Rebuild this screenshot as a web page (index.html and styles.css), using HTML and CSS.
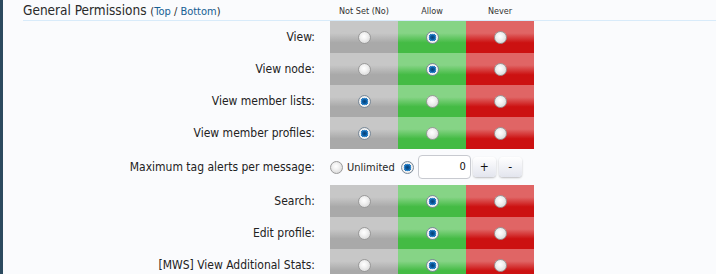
FILE: index.html
```html
<!DOCTYPE html>
<html>
<head>
<meta charset="utf-8">
<link rel="stylesheet" href="styles.css">
</head>
<body>
<div class="page">
  <div class="sidebar"></div>
  <div class="main">
    <div class="row head">
      <h3 class="title">General Permissions <span class="nav">(<a href="#">Top</a> / <a href="#">Bottom</a>)</span></h3>
      <div class="colhead">Not Set (No)</div>
      <div class="colhead">Allow</div>
      <div class="colhead">Never</div>
    </div>

    <div class="row">
      <div class="label">View:</div>
      <div class="cell unset"><span class="radio"></span></div>
      <div class="cell allow"><span class="radio on"></span></div>
      <div class="cell never"><span class="radio"></span></div>
    </div>
    <div class="row">
      <div class="label">View node:</div>
      <div class="cell unset"><span class="radio"></span></div>
      <div class="cell allow"><span class="radio on"></span></div>
      <div class="cell never"><span class="radio"></span></div>
    </div>
    <div class="row">
      <div class="label">View member lists:</div>
      <div class="cell unset"><span class="radio on"></span></div>
      <div class="cell allow"><span class="radio"></span></div>
      <div class="cell never"><span class="radio"></span></div>
    </div>
    <div class="row">
      <div class="label">View member profiles:</div>
      <div class="cell unset"><span class="radio on"></span></div>
      <div class="cell allow"><span class="radio"></span></div>
      <div class="cell never"><span class="radio"></span></div>
    </div>

    <div class="row tall">
      <div class="label">Maximum tag alerts per message:</div>
      <div class="options">
        <span class="radio small"></span>
        <span class="opt-text">Unlimited</span>
        <span class="radio small on"></span>
        <span class="numbox">0</span>
        <span class="btn">+</span>
        <span class="btn">-</span>
      </div>
    </div>

    <div class="row">
      <div class="label">Search:</div>
      <div class="cell unset"><span class="radio"></span></div>
      <div class="cell allow"><span class="radio on"></span></div>
      <div class="cell never"><span class="radio"></span></div>
    </div>
    <div class="row">
      <div class="label">Edit profile:</div>
      <div class="cell unset"><span class="radio"></span></div>
      <div class="cell allow"><span class="radio on"></span></div>
      <div class="cell never"><span class="radio"></span></div>
    </div>
    <div class="row">
      <div class="label">[MWS] View Additional Stats:</div>
      <div class="cell unset"><span class="radio"></span></div>
      <div class="cell allow"><span class="radio on"></span></div>
      <div class="cell never"><span class="radio"></span></div>
    </div>
  </div>
</div>
</body>
</html>
```

FILE: styles.css
```css
html, body {
  margin: 0;
  padding: 0;
  background: #fafbfd;
}
body {
  font-family: "DejaVu Sans Condensed", "DejaVu Sans", sans-serif;
  color: #252525;
  height: 274px;
  overflow: hidden;
}
.page {
  display: flex;
  height: 274px;
}
.sidebar {
  width: 3px;
  background: #2c4a5f;
  flex: none;
}
.main {
  flex: 1;
  padding-left: 20px;
}
.row {
  display: grid;
  grid-template-columns: 307px 68px 68px 68px;
  height: 32px;
}
.row.head {
  height: 20px;
  border-bottom: 1px solid #d8ebfa;
  align-items: center;
}
.title {
  margin: 0;
  font-size: 13.5px;
  font-weight: normal;
  line-height: 20px;
  color: #2a2a2a;
  white-space: nowrap;
}
.nav {
  font-size: 11px;
  color: #2a2a2a;
}
.nav a {
  color: #176093;
  text-decoration: none;
}
.colhead {
  font-size: 9px;
  text-align: center;
  color: #333;
}
.label {
  font-size: 12px;
  text-align: right;
  padding-right: 15px;
  display: flex;
  align-items: center;
  justify-content: flex-end;
  color: #222;
}
.cell {
  display: flex;
  align-items: center;
  justify-content: center;
}
.unset {
  background: linear-gradient(to bottom, #c7c7c7 0%, #c7c7c7 38%, #a9a9a9 68%, #a9a9a9 100%);
}
.allow {
  background: linear-gradient(to bottom, #86d486 0%, #86d486 38%, #44bb44 68%, #44bb44 100%);
}
.never {
  background: linear-gradient(to bottom, #e06565 0%, #e06565 38%, #cc1111 68%, #cc1111 100%);
}
.radio {
  width: 11px;
  height: 11px;
  border-radius: 50%;
  border: 1px solid #9a9a9a;
  background: radial-gradient(circle at 45% 40%, #ffffff 0%, #f2f2f2 35%, #cfcfcf 100%);
  box-sizing: content-box;
  flex: none;
}
.radio.on {
  border-color: #7a8a99;
  background: radial-gradient(circle at 50% 50%, #0a3f6e 0%, #0a5ea8 30%, #3b8fd0 42%, #1a70b8 48%, #f4f4f4 52%, #d8d8d8 100%);
}
.row.tall {
  height: 36px;
}
.options {
  grid-column: 2 / -1;
  display: flex;
  align-items: center;
  font-size: 11px;
}
.opt-text {
  margin-left: 4px;
  margin-right: 6px;
}
.numbox {
  margin-left: 4px;
  width: 53px;
  height: 24px;
  box-sizing: border-box;
  border: 1px solid #c8cad0;
  border-radius: 4px;
  background: #fff;
  text-align: right;
  padding-right: 4px;
  line-height: 22px;
  font-size: 11px;
  color: #111;
}
.btn {
  margin-left: 2px;
  width: 23px;
  height: 20px;
  border-radius: 4px;
  background: linear-gradient(to bottom, #ffffff, #e3e5ee);
  box-shadow: 0 1px 2px rgba(0,0,0,0.25);
  display: flex;
  align-items: center;
  justify-content: center;
  font-size: 12px;
  color: #111;
}
.btn + .btn {
  margin-left: 3px;
}
```
